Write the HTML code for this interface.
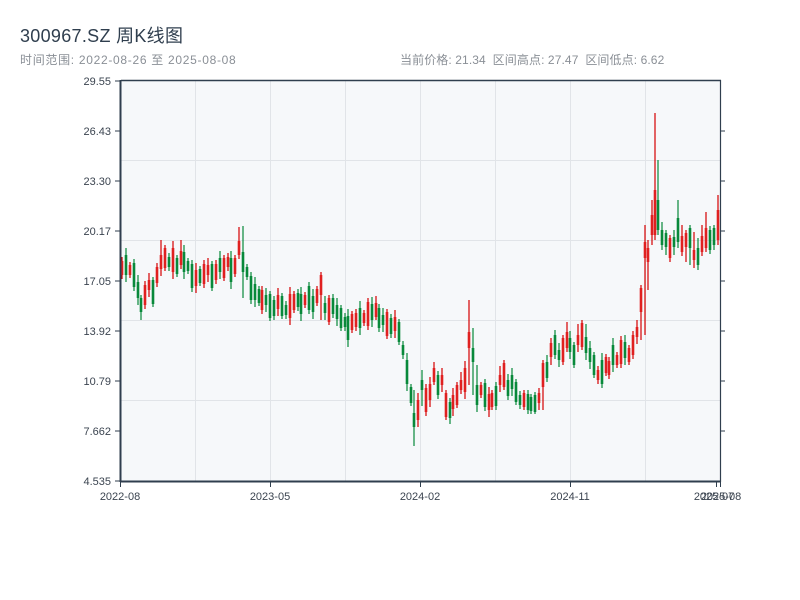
<!DOCTYPE html>
<html><head><meta charset="utf-8">
<style>
body{margin:0;width:800px;height:600px;background:#fff;font-family:"Liberation Sans","Noto Sans CJK SC",sans-serif;overflow:hidden;position:relative}
.t{position:absolute;left:20px;top:22px;font-size:18px;color:#2f3e4e;letter-spacing:0.3px}
.s{position:absolute;left:20px;top:51px;font-size:12px;color:#8a8f96;letter-spacing:0.7px}
.r{position:absolute;left:400px;top:51px;font-size:12px;color:#8a8f96;letter-spacing:0.1px}
svg{position:absolute;left:0;top:0}
text{font-family:"Liberation Sans",sans-serif;font-size:11px;fill:#3b4450}
</style></head><body>
<div class="t">300967.SZ 周K线图</div>
<div class="s">时间范围: 2022-08-26 至 2025-08-08</div>
<div class="r">当前价格: 21.34&nbsp;&nbsp;区间高点: 27.47&nbsp;&nbsp;区间低点: 6.62</div>
<svg width="800" height="600">
<rect x="121" y="81" width="599" height="400" fill="#f6f8fa"/>
<g stroke="#e1e4e8" stroke-width="1">
<line x1="195.5" y1="81" x2="195.5" y2="481"/><line x1="270.5" y1="81" x2="270.5" y2="481"/>
<line x1="345.5" y1="81" x2="345.5" y2="481"/><line x1="420.5" y1="81" x2="420.5" y2="481"/>
<line x1="495.5" y1="81" x2="495.5" y2="481"/><line x1="570.5" y1="81" x2="570.5" y2="481"/>
<line x1="645.5" y1="81" x2="645.5" y2="481"/>
<line x1="121" y1="160.5" x2="720" y2="160.5"/><line x1="121" y1="240.5" x2="720" y2="240.5"/>
<line x1="121" y1="320.5" x2="720" y2="320.5"/><line x1="121" y1="400.5" x2="720" y2="400.5"/>
</g>
<path fill="none" stroke="#d40000" stroke-width="1.2" d="M122 257V279M130 262V278M145 281V309M149 273V297M157 263V287M161 240V276M165 245V271M173 241V279M181 240V269M196 263V293M204 260V288M208 258V282M216 260V284M224 255V281M228 253V271M235 255V277M239 227V259M262 286V314M278 288V316M290 287V325M294 291V313M305 292V308M317 286V306M321 272V320M329 295V325M352 311V333M356 309V331M364 310V326M368 298V330M376 296V320M387 309V339M395 310V338M418 393V427M426 384V416M430 377V407M434 362V385M442 368V392M446 390V420M453 388V416M457 382V408M461 372V394M465 361V399M469 300V385M481 382V398M489 387V417M492 390V410M500 366V392M504 360V390M524 390V410M539 388V410M543 360V410M551 338V365M563 335V365M567 322V352M578 324V352M582 320V350M598 366V384M606 354V376M609 357V379M617 352V368M621 336V368M629 345V365M633 331V359M637 320V344M641 285V340M645 225V335M648 240V290M652 200V245M655 113V240M670 235V262M682 225V256M686 230V262M694 232V268M702 225V256M706 212V252M718 195V245"/>
<path fill="none" stroke="#e02020" stroke-width="2.6" d="M122 261V275M130 265V275M145 285V305M149 280V290M157 267V283M161 255V269M165 248V268M173 248V272M181 251V265M196 270V286M204 264V284M208 265V275M216 264V280M224 258V278M228 257V267M235 258V274M239 241V255M262 290V310M278 295V309M290 294V318M294 294V310M305 295V305M317 289V303M321 275V295M329 298V322M352 314V330M356 313V327M364 313V323M368 302V326M376 303V317M387 312V336M395 317V331M418 400V420M426 388V412M430 384V400M434 368V382M442 375V385M446 393V417M453 395V409M457 385V405M461 380V390M465 368V392M469 332V348M481 385V395M489 394V410M492 393V407M500 375V385M504 363V387M524 393V407M539 393V403M543 363V387M551 343V357M563 338V362M567 332V348M578 335V345M582 323V347M598 370V380M606 357V373M609 361V375M617 355V365M621 340V364M629 348V362M633 335V355M637 327V337M641 288V312M645 242V258M648 248V262M652 215V235M655 190V235M670 238V258M682 236V252M686 233V247M694 250V260M702 236V252M706 228V248M718 210V240"/>
<path fill="none" stroke="#08893a" stroke-width="1.2" d="M126 248V282M134 259V291M138 275V305M141 295V320M153 277V307M169 253V271M177 255V277M184 245V279M188 258V274M192 260V292M200 266V286M212 261V291M220 251V279M231 251V289M243 226V298M247 264V280M251 272V304M255 277V307M259 286V306M266 288V312M270 291V321M274 296V320M282 293V319M286 301V319M298 289V311M301 287V321M309 282V314M313 289V319M325 296V320M333 294V318M337 298V326M341 305V331M345 313V331M348 309V347M360 301V335M372 297V327M379 304V332M383 308V332M391 314V338M399 319V345M403 341V359M407 353V391M411 384V406M414 390V446M422 370V406M438 371V399M450 398V424M473 328V395M477 365V412M485 379V411M496 382V410M508 374V400M512 368V396M516 379V405M520 391V409M528 390V414M531 394V414M535 392V414M547 355V382M555 330V359M559 343V367M570 331V359M574 342V368M586 324V360M590 341V369M594 352V378M602 353V388M613 338V372M625 335V365M658 160V235M662 222V250M666 230V255M674 230V255M678 200V248M690 225V265M698 238V270M710 226V254M714 225V250"/>
<path fill="none" stroke="#08893a" stroke-width="2.6" d="M126 255V275M134 263V287M138 282V298M141 298V312M153 280V304M169 257V267M177 258V274M184 252V272M188 261V271M192 264V288M200 269V283M212 264V288M220 258V272M231 258V282M243 252V272M247 267V277M251 276V300M255 284V300M259 289V303M266 295V305M270 294V318M274 300V316M282 296V316M286 305V315M298 293V307M301 294V314M309 286V310M313 296V312M325 303V313M333 298V314M337 305V319M341 308V328M345 317V327M348 316V340M360 308V328M372 304V320M379 308V328M383 315V325M391 318V334M399 322V342M403 345V355M407 360V384M411 387V403M414 413V427M422 380V390M438 375V395M450 402V418M473 348V362M477 385V405M485 383V407M496 386V406M508 380V396M512 375V389M516 382V402M520 395V405M528 394V410M531 397V411M535 395V412M547 362V378M555 335V355M559 350V360M570 338V352M574 345V365M586 337V353M590 348V362M594 355V375M602 360V384M613 345V365M625 342V358M658 200V230M662 230V245M666 233V247M674 237V247M678 218V242M690 228V248M698 248V265M710 230V250M714 228V245"/>
<g stroke="#2f3e4e" fill="none">
<line x1="121" y1="80.5" x2="721" y2="80.5" stroke-width="1.5"/>
<line x1="120.5" y1="80" x2="120.5" y2="482" stroke-width="2"/>
<line x1="120" y1="481.5" x2="721" y2="481.5" stroke-width="2"/>
<line x1="720.5" y1="80" x2="720.5" y2="482" stroke-width="1.2"/>
<g stroke-width="1">
<line x1="115" y1="81" x2="120" y2="81"/><line x1="115" y1="131" x2="120" y2="131"/><line x1="115" y1="181" x2="120" y2="181"/><line x1="115" y1="231" x2="120" y2="231"/><line x1="115" y1="281" x2="120" y2="281"/><line x1="115" y1="331" x2="120" y2="331"/><line x1="115" y1="381" x2="120" y2="381"/><line x1="115" y1="431" x2="120" y2="431"/><line x1="115" y1="481" x2="120" y2="481"/>
<line x1="720" y1="131" x2="725" y2="131"/><line x1="720" y1="181" x2="725" y2="181"/><line x1="720" y1="231" x2="725" y2="231"/><line x1="720" y1="281" x2="725" y2="281"/><line x1="720" y1="331" x2="725" y2="331"/><line x1="720" y1="381" x2="725" y2="381"/><line x1="720" y1="431" x2="725" y2="431"/>
<line x1="120.5" y1="482" x2="120.5" y2="487"/><line x1="270.5" y1="482" x2="270.5" y2="487"/><line x1="420.5" y1="482" x2="420.5" y2="487"/><line x1="570.5" y1="482" x2="570.5" y2="487"/><line x1="716.5" y1="482" x2="716.5" y2="487"/><line x1="720.5" y1="482" x2="720.5" y2="487"/>
</g></g>
<g text-anchor="end">
<text x="111" y="85">29.55</text><text x="111" y="135">26.43</text><text x="111" y="185">23.30</text><text x="111" y="235">20.17</text><text x="111" y="285">17.05</text><text x="111" y="335">13.92</text><text x="111" y="385">10.79</text><text x="111" y="435">7.662</text><text x="111" y="485">4.535</text>
</g>
<g text-anchor="middle">
<text x="120" y="500">2022-08</text><text x="270" y="500">2023-05</text><text x="420" y="500">2024-02</text><text x="570" y="500">2024-11</text><text x="714" y="500">2025-07</text><text x="721" y="500">2025-08</text>
</g>
</svg>
</body></html>
